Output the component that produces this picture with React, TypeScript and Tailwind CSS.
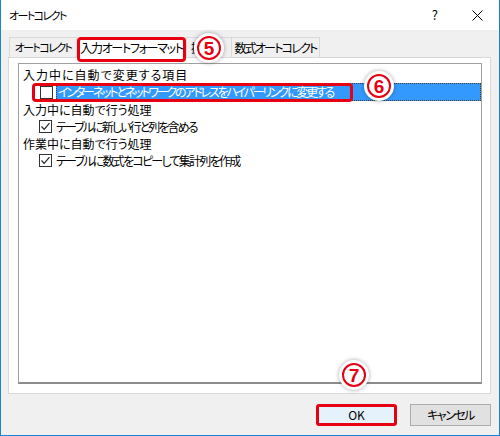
const FONT = "font-['Noto_Sans_CJK_JP','Noto_Sans',sans-serif] [font-feature-settings:'palt']";

const Circled = ({ n, className }: { n: string; className: string }) => (
  <div
    className={`absolute w-[30px] h-[30px] rounded-full bg-white shadow-[0_0_4px_rgba(0,0,0,0.35)] flex items-center justify-center ${className}`}
  >
    <div className="w-[24px] h-[24px] rounded-full border-2 border-[#e60012] flex items-center justify-center text-[#e60012] text-[19px] font-bold leading-none font-['Liberation_Sans',sans-serif]">
      {n}
    </div>
  </div>
);

const CheckBox = ({ checked }: { checked: boolean }) => (
  <div className="w-[13px] h-[13px] border border-[#333] bg-white flex items-center justify-center shrink-0">
    {checked && (
      <svg width="11" height="11" viewBox="0 0 11 11">
        <path d="M1.5 5.5 L4.2 8.3 L9.5 2.2" fill="none" stroke="#222" strokeWidth="1.2" />
      </svg>
    )}
  </div>
);

const App = () => {
  return (
    <div className={`relative w-[500px] h-[436px] flex flex-col border-x border-b border-[#1883d7] bg-[#f0f0f0] text-[12px] text-black whitespace-nowrap ${FONT}`}>
      {/* title bar */}
      <div className="h-[30px] bg-white flex items-center pl-[8px] shrink-0">
        <span className="text-[11px] tracking-[-1.6px]">オートコレクト</span>
        <span className="ml-auto mr-[34px] text-[13px]">?</span>
        <svg className="mr-[16px]" width="11" height="11" viewBox="0 0 11 11">
          <path d="M0.5 0.5 L10.5 10.5 M10.5 0.5 L0.5 10.5" stroke="#000" strokeWidth="1" />
        </svg>
      </div>

      <div className="flex flex-col pl-[7px] pt-[5px]">
        {/* tabs */}
        <div className="flex h-[22px] items-start pl-px">
          <div className="mt-[2px] w-[68px] h-[20px] border border-b-0 border-[#d9d9d9] bg-[#f0f0f0] flex items-center justify-center text-[11px] tracking-[-1.6px]">
            オートコレクト
          </div>
          <div className="relative z-10 mt-[2px] w-[109px] h-[25px] border-[3px] border-[#e60012] rounded-[4px] bg-white flex items-center justify-center pb-[3px] tracking-[-1.3px]">
            入力オートフォーマット
          </div>
          <div className="mt-[2px] w-[45px] h-[20px] border border-b-0 border-r-0 border-[#d9d9d9] bg-[#f0f0f0] flex items-center pl-[4px]">
            操作
          </div>
          <div className="mt-[2px] w-[89px] h-[20px] border border-b-0 border-[#d9d9d9] bg-[#f0f0f0] flex items-center justify-center tracking-[-1.8px]">
            数式オートコレクト
          </div>
        </div>

        {/* panel */}
        <div className="w-[483px] h-[337px] bg-white border border-[#d9d9d9] pt-[5px] pl-[9px]">
          <div className="w-[464px] h-[321px] border border-[#a0a0a0] border-b-2 border-b-[#8c8c8c] pt-[2px] flex flex-col">
            <div className="h-[17px] flex items-center pl-[4px] tracking-[1px]">入力中に自動で変更する項目</div>
            <div className="relative h-[18px] flex items-center pl-[21px]">
              <CheckBox checked={false} />
              <div className="ml-[3px] flex-1 h-[18px] bg-[#3399ff] border border-dotted border-[#4a3a2a] text-white flex items-center pl-[1px] tracking-[-2.2px]">
                インターネットとネットワークのアドレスをハイパーリンクに変更する
              </div>
              <div className="absolute left-[13px] top-0 w-[321px] h-[19px] border-[3px] border-[#e60012] rounded-[4px]" />
            </div>
            <div className="h-[17px] flex items-center pl-[4px]">入力中に自動で行う処理</div>
            <div className="h-[17px] flex items-center pl-[20px] gap-[4px]">
              <CheckBox checked />
              <span className="tracking-[-1.9px]">テーブルに新しい行と列を含める</span>
            </div>
            <div className="h-[17px] flex items-center pl-[4px]">作業中に自動で行う処理</div>
            <div className="h-[17px] flex items-center pl-[20px] gap-[4px]">
              <CheckBox checked />
              <span className="tracking-[-1.75px]">テーブルに数式をコピーして集計列を作成</span>
            </div>
          </div>
        </div>

        {/* buttons */}
        <div className="flex w-[483px] justify-end gap-[13px] pt-[10px]">
          <div className="w-[81px] h-[22px] border-[3px] border-[#e60012] rounded-[3px] bg-[#e5f1fb] flex items-center justify-center">
            OK
          </div>
          <div className="w-[81px] h-[22px] border border-[#adadad] bg-[#e1e1e1] flex items-center justify-center tracking-[-1.5px]">
            キャンセル
          </div>
        </div>
      </div>

      <Circled n="5" className="left-[193px] top-[33px]" />
      <Circled n="6" className="left-[363px] top-[71px]" />
      <Circled n="7" className="left-[338px] top-[360px]" />
    </div>
  );
};

export default App;
